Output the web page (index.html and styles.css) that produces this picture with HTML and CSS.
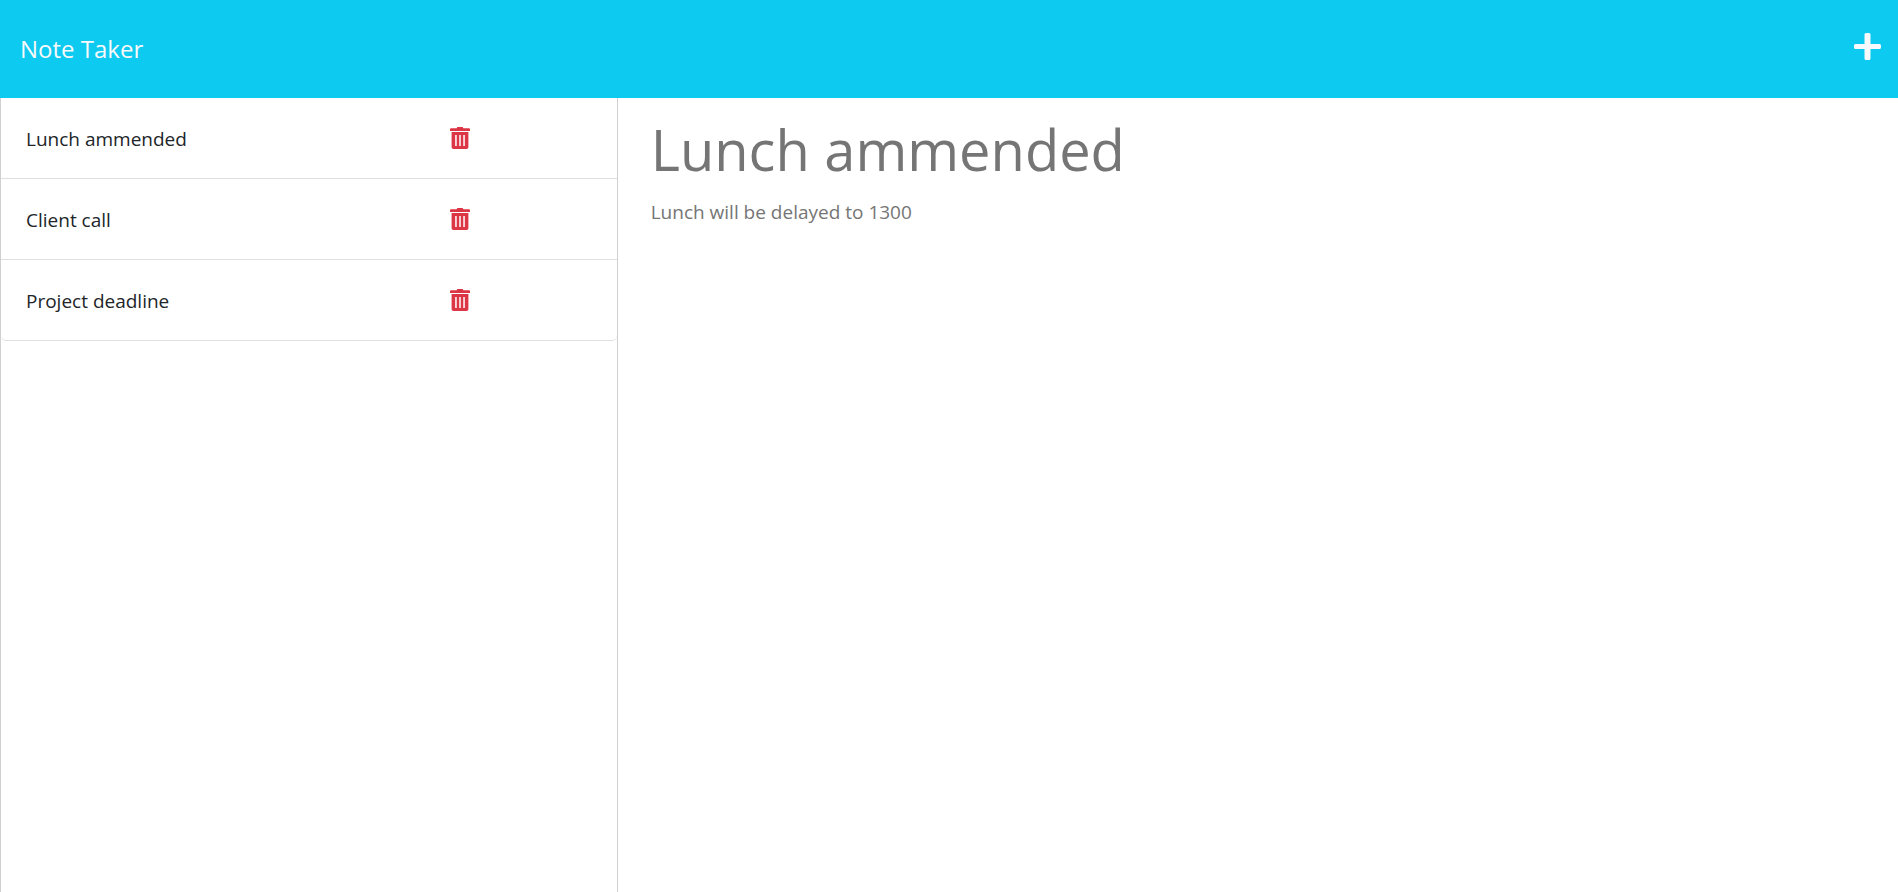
FILE: index.html
```html
<!DOCTYPE html>
<html lang="en">
<head>
<meta charset="utf-8">
<meta name="viewport" content="width=device-width, initial-scale=1">
<title>Note Taker</title>
<link rel="stylesheet" href="styles.css">
</head>
<body>
<svg class="symbols" aria-hidden="true">
  <symbol id="trash" viewBox="0 0 20 22">
    <path fill-rule="evenodd" d="M1 1.2h5.600L7.400 0h5.200l.8 1.200H19a1 1 0 0 1 1 1V4H0V2.200a1 1 0 0 1 1-1zM1.600 5h16.800v15.200a1.800 1.800 0 0 1-1.800 1.800H3.400a1.800 1.800 0 0 1-1.800-1.800zM5.200 8v11h1.500V8zM9.250 8v11h1.500V8zM13.300 8v11h1.500V8z"/>
  </symbol>
</svg>
<header class="navbar">
  <a class="brand" href="#">Note Taker</a>
  <button class="icon-button new-note" type="button" aria-label="New note">
    <svg class="plus" viewBox="0 0 27 27" aria-hidden="true"><path d="M12 0h3a1.500 1.500 0 0 1 1.500 1.500v9.500h9a1.500 1.500 0 0 1 1.500 1.500v2a1.500 1.500 0 0 1-1.500 1.500h-9v9.500a1.500 1.500 0 0 1-1.500 1.500h-3a1.500 1.500 0 0 1-1.500-1.500V16h-9A1.500 1.500 0 0 1 0 14.500v-2A1.500 1.500 0 0 1 1.500 11h9V1.500A1.500 1.500 0 0 1 12 0z"/></svg>
  </button>
</header>
<main class="row">
  <aside class="sidebar">
    <ul class="notes">
      <li class="note"><a class="note-title" href="#">Lunch ammended</a><button class="icon-button" type="button" aria-label="Delete Lunch ammended"><svg class="trash"><use href="#trash"/></svg></button></li>
      <li class="note"><a class="note-title" href="#">Client call</a><button class="icon-button" type="button" aria-label="Delete Client call"><svg class="trash"><use href="#trash"/></svg></button></li>
      <li class="note"><a class="note-title" href="#">Project deadline</a><button class="icon-button" type="button" aria-label="Delete Project deadline"><svg class="trash"><use href="#trash"/></svg></button></li>
    </ul>
  </aside>
  <section class="editor">
    <input class="title-field" type="text" aria-label="Note title" value="Lunch ammended" readonly>
    <textarea class="text-field" aria-label="Note text" readonly>Lunch will be delayed to 1300</textarea>
  </section>
</main>
</body>
</html>
```
FILE: styles.css
```css
* { box-sizing: border-box; }

body {
  display: flex;
  flex-direction: column;
  min-height: 100vh;
  margin: 0;
  background: #fff;
  color: #212529;
  font: 19px/30px "Segoe UI", "Open Sans", "Noto Sans", sans-serif;
}

.symbols { position: absolute; width: 0; height: 0; }

.navbar {
  display: flex;
  align-items: center;
  justify-content: space-between;
  height: 98px;
  padding: 0 17px 0 20px;
  background: #0dcaf0;
}

.brand {
  color: #f8f9fa;
  font-size: 24px;
  line-height: 38px;
  text-decoration: none;
}

.icon-button {
  display: block;
  padding: 0;
  border: 0;
  background: none;
  cursor: pointer;
}

.new-note { padding-bottom: 5px; }
.plus { display: block; width: 27px; height: 27px; fill: #f8f9fa; }
.trash { display: block; width: 20px; height: 22px; fill: #dc3545; }

.row {
  display: grid;
  grid-template-columns: 1fr 2fr;
  flex: 1;
}

.sidebar {
  margin-right: 15px;
  border: solid #ced0d2;
  border-width: 0 1px;
}

.notes {
  margin: 0;
  padding: 0;
  border-bottom: 1px solid #dfdfdf;
  border-radius: 0 0 5px 5px;
  list-style: none;
}

.note {
  display: grid;
  grid-template-columns: 3fr 1fr;
  align-items: center;
  height: 81px;
  padding: 0 25px;
  border-bottom: 1px solid #dfdfdf;
}

.note:last-child { height: 80px; border-bottom: 0; }

.note-title { padding-top: 2px; color: #212529; text-decoration: none; }

.note .icon-button { justify-self: start; }

.editor {
  display: flex;
  flex-direction: column;
  padding: 15px 15px 0 18px;
}

.title-field,
.text-field {
  width: 100%;
  padding: 0;
  border: 0;
  outline: 0;
  background: none;
  color: #757575;
  font-family: inherit;
}

.title-field { height: 72px; font-size: 56px; line-height: 72px; }

.text-field {
  flex: 1;
  margin-top: 12px;
  resize: none;
  font-size: 19px;
  line-height: 30px;
}
```
